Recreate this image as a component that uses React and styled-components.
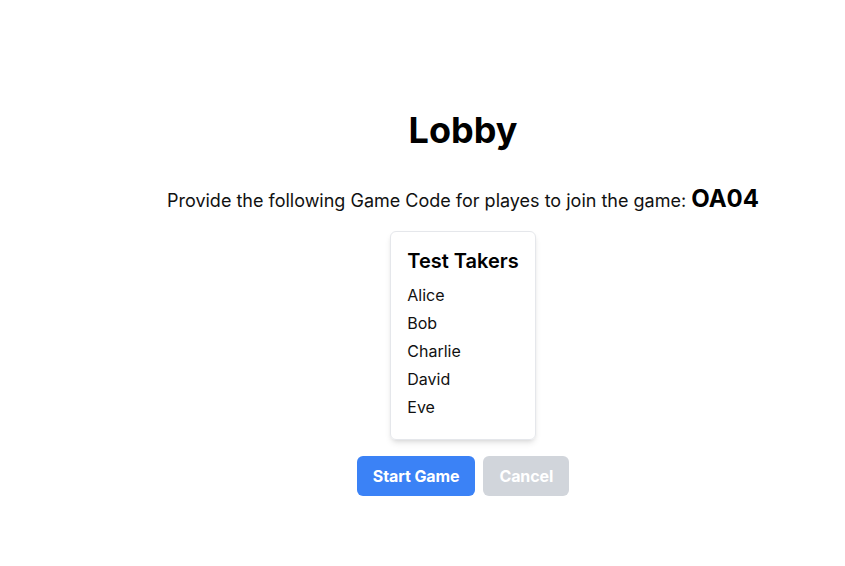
import styled, { createGlobalStyle } from "styled-components";

const Global = createGlobalStyle`
    * { box-sizing: border-box; }
    body {
        margin: 0;
        background: #fff;
        font-family: Inter, "Noto Sans", sans-serif;
        color: #000;
    }
`

const Pagina = styled.main`
    display: flex;
    flex-direction: column;
    align-items: center;
    padding: 110px 0 0 81px;
    min-height: 566px;
`

const Titulo = styled.h1`
    margin: 0 0 33px;
    font-size: 36px;
    line-height: 40px;
    font-weight: 700;
`

const Instrucciones = styled.p`
    margin: 0 0 16px;
    font-size: 18px;
    line-height: 28px;
    color: #111;

    strong {
        font-size: 24px;
        line-height: 32px;
        font-weight: 700;
        color: #000;
    }
`

const Tarjeta = styled.section`
    border: 1px solid #e5e7eb;
    border-radius: 6px;
    padding: 15px 16px 16px;
    box-shadow: 0 4px 6px -1px rgba(0, 0, 0, 0.1), 0 2px 4px -2px rgba(0, 0, 0, 0.1);

    h2 {
        margin: 0 0 8px;
        font-size: 20px;
        line-height: 28px;
        font-weight: 600;
    }

    ul {
        margin: 0;
        padding: 0;
        list-style: none;
    }

    li {
        font-size: 16px;
        line-height: 24px;
        margin-bottom: 4px;
        color: #111;
    }
`

const Botones = styled.div`
    display: flex;
    gap: 8px;
    margin-top: 16px;
`

const Boton = styled.button`
    border: none;
    border-radius: 6px;
    padding: 8px 16px;
    height: 40px;
    font-family: inherit;
    font-size: 16px;
    font-weight: 700;
    letter-spacing: -0.1px;
    color: #fff;
    background: ${p => p.$gris ? '#d1d5db' : '#3b82f6'};
    cursor: ${p => p.$gris ? 'not-allowed' : 'pointer'};
`

const jugadores = ['Alice', 'Bob', 'Charlie', 'David', 'Eve']

const App = () => {
    return (
        <Pagina>
            <Global />
            <Titulo>Lobby</Titulo>
            <Instrucciones>
                Provide the following Game Code for playes to join the game: <strong>OA04</strong>
            </Instrucciones>
            <Tarjeta>
                <h2>Test Takers</h2>
                <ul>
                    {jugadores.map(j => <li key={j}>{j}</li>)}
                </ul>
            </Tarjeta>
            <Botones>
                <Boton>Start Game</Boton>
                <Boton $gris disabled>Cancel</Boton>
            </Botones>
        </Pagina>
    )
}

export default App;
